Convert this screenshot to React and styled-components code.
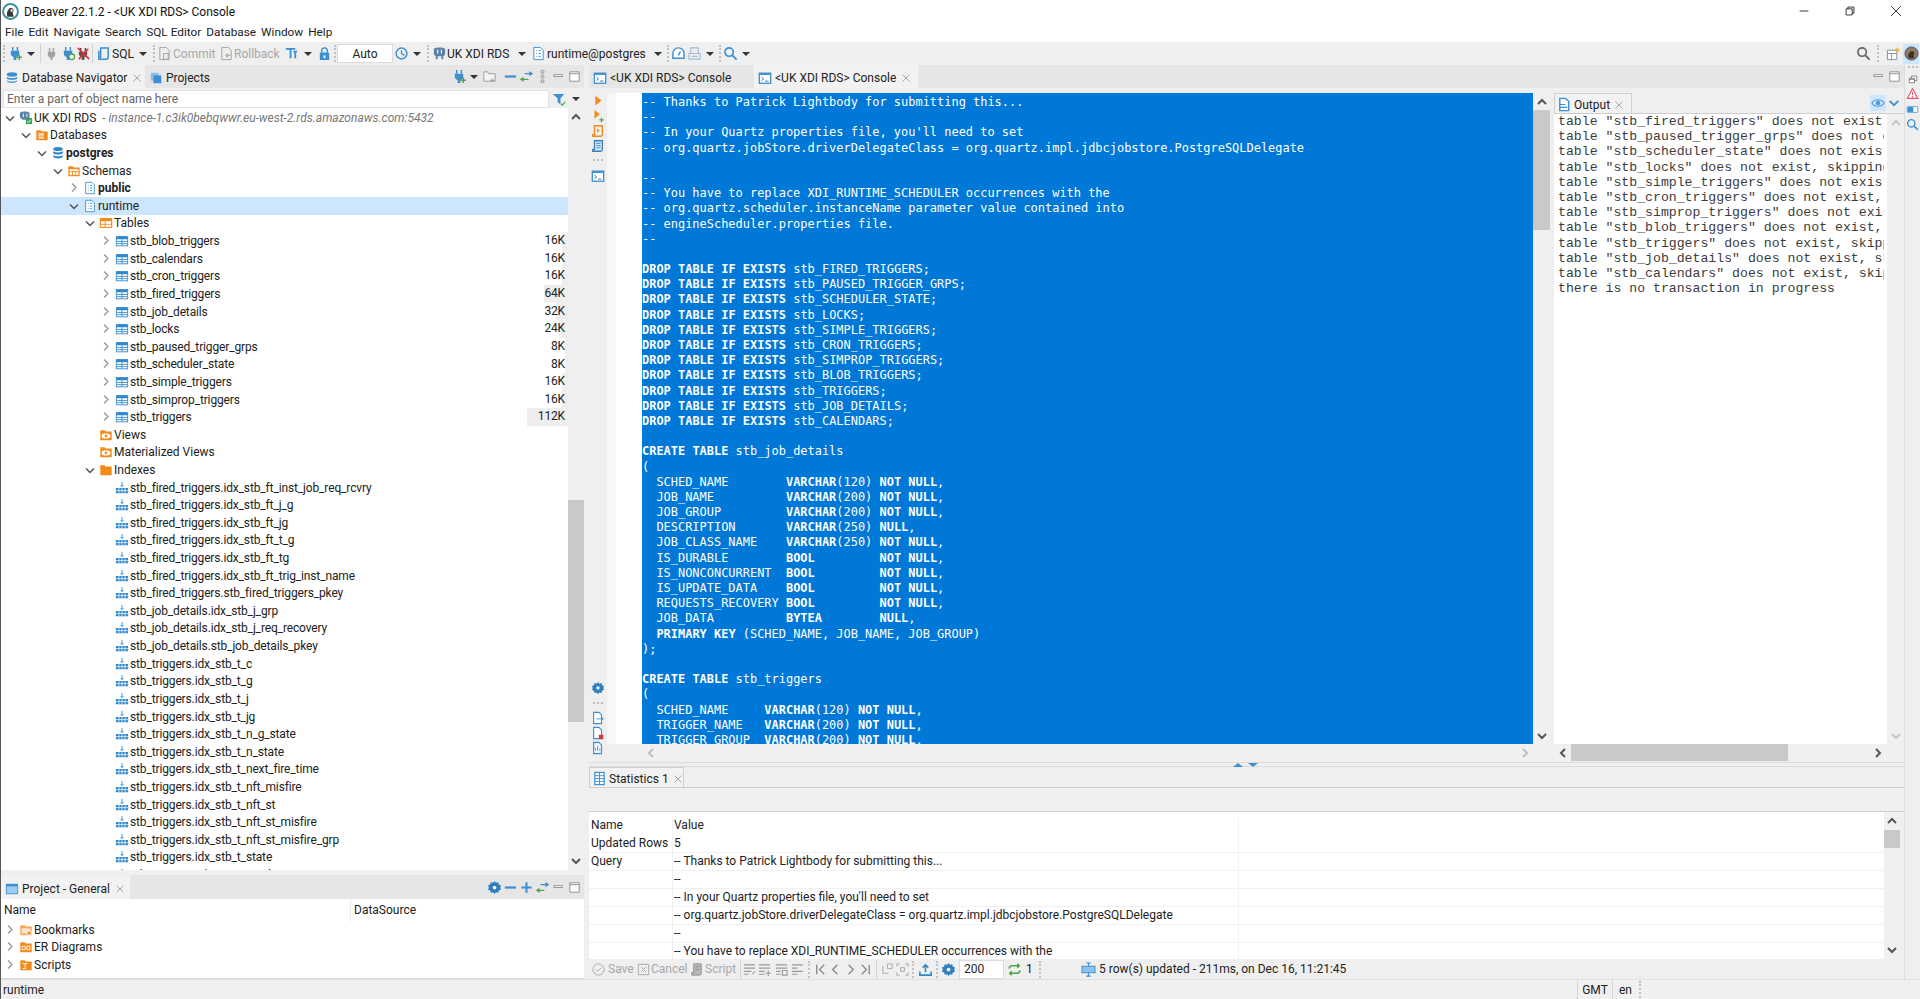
import React from 'react';
import styled, { createGlobalStyle } from 'styled-components';

const BLUE = '#3d8fd1';
const ORANGE = '#f28b1c';
const GREEN = '#4aa84a';
const RED = '#d8343c';
const GREY = '#a2a2a2';
const DARK = '#555';

const GlobalStyle = createGlobalStyle`
  html, body {
    margin: 0;
    padding: 0;
    height: 100%;
    overflow: hidden;
    background: #efefef;
  }
  #root {
    height: 100%;
  }
`;

const Window = styled.div`
  width: 1920px;
  height: 999px;
  display: flex;
  flex-direction: column;
  overflow: hidden;
  box-sizing: border-box;
  border-left: 1px solid #555;
  background: #efefef;
  color: #222;
  font-family: Roboto, "Noto Sans", sans-serif;
  font-size: 12px;
`;

const IconSvg = styled.svg`
  flex: none;
  display: block;
`;
const TitleBar = styled.div`
  height: 22px;
  flex: none;
  display: flex;
  align-items: center;
  background: #fff;
  padding-left: 1px;
  font-size: 12px;
  color: #111;
`;
const TitleText = styled.span`
  margin-left: 5px;
  padding-top: 2px;
`;
const WindowButtons = styled.div`
  margin-left: auto;
  display: flex;
  margin-right: 1px;
`;
const WindowButton = styled.div`
  width: 46px;
  height: 20px;
  display: flex;
  align-items: center;
  justify-content: center;
`;
const MenuBar = styled.div`
  height: 20px;
  flex: none;
  display: flex;
  align-items: center;
  gap: 5px;
  padding-left: 4px;
  background: #fff;
  font-size: 11.8px;
`;
const Toolbar = styled.div`
  height: 23px;
  flex: none;
  display: flex;
  align-items: center;
  background: #efefef;
`;
const Slot = styled.div`
  width: ${p => p.$w}px;
  height: ${p => p.$h || 20}px;
  flex: none;
  display: flex;
  align-items: center;
  justify-content: center;
  background: ${p => p.$bg || 'transparent'};
`;
const ToolText = styled.div`
  width: ${p => p.$w}px;
  flex: none;
  white-space: nowrap;
  color: ${p => (p.$off ? '#a8a8a8' : '#222')};
  padding-left: ${p => p.$pl || 0}px;
  box-sizing: border-box;
`;
const Push = styled.div`
  flex: 1;
`;
const CaretShape = styled.div`
  width: 0;
  height: 0;
  border-left: 4px solid transparent;
  border-right: 4px solid transparent;
  border-top: 4px solid #333;
`;
const Dots = styled.div`
  width: 0;
  height: 17px;
  border-left: 2px dotted #c0c0c0;
`;
const Divider = styled.div`
  width: 1px;
  height: 19px;
  background: #d2d2d2;
`;
const ValueBox = styled.div`
  width: ${p => p.$w}px;
  height: 19px;
  flex: none;
  box-sizing: border-box;
  background: #fff;
  border: 1px solid #dcdcdc;
  display: flex;
  align-items: center;
  justify-content: ${p => (p.$left ? 'flex-start' : 'center')};
  padding-left: ${p => (p.$left ? 4 : 0)}px;
  font-size: 12px;
`;

const Workspace = styled.div`
  flex: 1;
  min-height: 0;
  display: flex;
`;
const LeftColumn = styled.div`
  width: 583px;
  flex: none;
  display: flex;
  flex-direction: column;
`;
const NavPanel = styled.div`
  height: 805px;
  flex: none;
  display: flex;
  flex-direction: column;
  overflow: hidden;
`;
const ProjectPanel = styled.div`
  margin-top: 5px;
  flex: 1;
  min-height: 0;
  display: flex;
  flex-direction: column;
  background: #fff;
  border-bottom: 1px solid #d8d8d8;
`;
const TabRow = styled.div`
  height: ${p => p.$h || 23}px;
  flex: none;
  display: flex;
  align-items: stretch;
  background: ${p => p.$bg || '#e6e6e6'};
  border-bottom: ${p => (p.$line ? '1px solid #cfcfcf' : 'none')};
  box-sizing: border-box;
`;
const Tab = styled.div`
  width: ${p => p.$w}px;
  flex: none;
  box-sizing: border-box;
  display: flex;
  align-items: center;
  gap: ${p => (p.$boxed ? 2 : 3)}px;
  padding-left: ${p => (p.$boxed ? 2 : 4)}px;
  padding-top: ${p => (p.$boxed ? 2 : 3)}px;
  font-size: 12px;
  white-space: nowrap;
  background: ${p => (p.$active ? '#f2f2f2' : 'transparent')};
  border-top: ${p => (p.$boxed ? '1px solid #d0d0d0' : 'none')};
  border-right: ${p => (p.$boxed ? '1px solid #d0d0d0' : 'none')};
  border-left: ${p => (p.$boxed ? '1px solid #d0d0d0' : 'none')};
`;
const TabClose = styled.span`
  margin-left: auto;
  margin-right: ${p => p.$mr || 5}px;
  display: flex;
`;
const TabTools = styled.div`
  margin-left: auto;
  display: flex;
  align-items: center;
  padding-right: ${p => p.$pr || 2}px;
`;
const FilterRow = styled.div`
  height: 20px;
  flex: none;
  display: flex;
  align-items: flex-end;
  padding-left: 2px;
  background: #efefef;
`;
const FilterInput = styled.div`
  width: 546px;
  height: 18px;
  box-sizing: border-box;
  background: #fff;
  border: 1px solid #e2e2e2;
  padding-left: 3px;
  line-height: 16px;
  color: #666;
`;
const TreeArea = styled.div`
  flex: 1;
  min-height: 0;
  display: flex;
  background: #fff;
`;
const Tree = styled.div`
  flex: 1;
  min-width: 0;
  overflow: hidden;
  padding-top: 1px;
`;
const Row = styled.div`
  height: 17.62px;
  display: flex;
  align-items: center;
  padding-left: ${p => p.$level * 16 + 3}px;
  background: ${p => (p.$selected ? '#cde6ff' : 'transparent')};
  white-space: nowrap;
  font-weight: ${p => (p.$bold ? 700 : 400)};
  letter-spacing: ${p => (p.$level === 6 ? '-0.14px' : 'normal')};
`;
const ChevronBox = styled.div`
  width: 12px;
  height: 12px;
  flex: none;
  display: flex;
  align-items: center;
  justify-content: center;
`;
const RowIcon = styled.div`
  width: 16px;
  height: 16px;
  flex: none;
  margin-left: 2px;
  display: flex;
  align-items: center;
  justify-content: center;
`;
const RowDesc = styled.span`
  margin-left: 6px;
  font-style: italic;
  color: #777;
`;
const RowSize = styled.div`
  margin-left: auto;
  height: 100%;
  width: 50px;
  box-sizing: border-box;
  padding-right: 3px;
  text-align: right;
  line-height: 17.62px;
  background: linear-gradient(to left, #eeeeee ${p => p.$bar}px, transparent 0);
`;
const ScrollV = styled.div`
  width: ${p => p.$w || 16}px;
  flex: none;
  display: flex;
  flex-direction: column;
  align-items: stretch;
  background: #f0f0f0;
`;
const ScrollEnd = styled.div`
  height: ${p => p.$h || 18}px;
  flex: none;
  display: flex;
  align-items: center;
  justify-content: center;
`;
const ScrollGap = styled.div`
  height: ${p => p.$h}px;
  flex: ${p => (p.$h ? 'none' : 1)};
`;
const ScrollThumb = styled.div`
  height: ${p => p.$h}px;
  flex: none;
  background: #c9c9c9;
`;
const ColumnHeaders = styled.div`
  height: 21px;
  flex: none;
  display: grid;
  grid-template-columns: 349px 1fr;
  align-items: center;
`;
const ColumnHead = styled.div`
  height: 100%;
  line-height: 23px;
  padding-left: ${p => p.$pl}px;
  border-left: ${p => (p.$sep ? '1px solid #eee' : 'none')};
`;
const ProjectRows = styled.div`
  padding-top: 1px;
`;

const Sash = styled.div`
  width: 5px;
  flex: none;
`;
const CenterColumn = styled.div`
  flex: 1;
  min-width: 0;
  display: flex;
  flex-direction: column;
`;
const ConsoleBody = styled.div`
  height: 674px;
  flex: none;
  display: flex;
  padding-top: 5px;
  box-sizing: border-box;
`;
const EditorSide = styled.div`
  width: 961px;
  flex: none;
  display: flex;
  flex-direction: column;
`;
const EditorMain = styled.div`
  height: 651px;
  flex: none;
  display: flex;
`;
const SideBar = styled.div`
  width: 18px;
  height: 662px;
  flex: none;
  align-self: flex-start;
  display: flex;
  flex-direction: column;
  align-items: center;
`;
const SideBarItem = styled.div`
  height: ${p => p.$h || 15}px;
  flex: none;
  display: flex;
  align-items: center;
  justify-content: center;
`;
const SideDots = styled.div`
  width: 10px;
  height: 0;
  border-top: 2px dotted #bdbdbd;
  margin: ${p => p.$m};
`;
const SideSpring = styled.div`
  flex: 1;
`;
const Ruler = styled.div`
  width: 9px;
  flex: none;
  background: #f7f7f7;
`;
const LineGutter = styled.div`
  width: 26px;
  flex: none;
  background: #fff;
`;
const Code = styled.div`
  flex: 1;
  min-width: 0;
  overflow: hidden;
  box-sizing: border-box;
  padding-top: 2px;
  background: #0078d7;
  color: #fff;
  font-family: "DejaVu Sans Mono", "Liberation Mono", monospace;
  font-size: 11.96px;
  line-height: 15.2px;
  white-space: pre;
`;
const CodeLine = styled.div`
  height: 15.2px;
`;
const ScrollH = styled.div`
  height: 17px;
  flex: none;
  display: flex;
  align-items: center;
  background: #f0f0f0;
  margin-left: ${p => p.$ml || 0}px;
`;
const ScrollHEnd = styled.div`
  width: ${p => p.$w || 17}px;
  flex: none;
  display: flex;
  align-items: center;
  justify-content: center;
`;
const ScrollHThumb = styled.div`
  width: ${p => p.$w}px;
  height: 17px;
  flex: none;
  background: #c9c9c9;
`;
const Spring = styled.div`
  flex: 1;
`;
const OutputPanel = styled.div`
  width: 350px;
  flex: none;
  margin-left: 4px;
  display: flex;
  flex-direction: column;
`;
const OutputBody = styled.div`
  height: 630px;
  flex: none;
  display: flex;
`;
const OutputText = styled.div`
  width: 333px;
  flex: none;
  box-sizing: border-box;
  overflow: hidden;
  background: #fff;
  border-left: 4px solid #fff;
  border-right: 3px solid #fff;
  color: #3c3c3c;
  font-family: "Liberation Mono", "Courier New", monospace;
  font-size: 13.2px;
  line-height: 15.2px;
  white-space: pre;
`;
const SplitBar = styled.div`
  height: 5px;
  flex: none;
  display: flex;
  justify-content: center;
  gap: 5px;
  align-items: center;
  box-sizing: border-box;
  border-top: 1px solid #dcdcdc;
  border-bottom: 1px solid #dcdcdc;
  padding-right: 2px;
`;
const StatsGap = styled.div`
  height: 24px;
  flex: none;
  border-bottom: 1px solid #cfcfcf;
  box-sizing: border-box;
`;
const StatsBody = styled.div`
  height: 147px;
  flex: none;
  display: flex;
  padding-right: 4px;
`;
const StatsTable = styled.div`
  flex: 1;
  min-width: 0;
  overflow: hidden;
  background: #fff;
  padding-top: 5px;
`;
const StatsRow = styled.div`
  height: 18px;
  display: grid;
  grid-template-columns: 83px 566px 1fr;
  box-sizing: border-box;
  border-bottom: ${p => (p.$head ? 'none' : '1px solid #f1f1f1')};
  line-height: 17px;
  white-space: nowrap;
`;
const StatsCell = styled.div`
  padding-left: ${p => (p.$first ? 2 : 1)}px;
  border-left: ${p => (p.$first ? 'none' : '1px solid #f1f1f1')};
  overflow: hidden;
`;
const ResultBar = styled.div`
  height: 20px;
  flex: none;
  display: flex;
  align-items: center;
`;
const TrimBar = styled.div`
  width: 15px;
  flex: none;
  margin-left: 0;
  border-left: 1px solid #dcdcdc;
  display: flex;
  flex-direction: column;
  align-items: center;
`;
const StatusBar = styled.div`
  height: 20px;
  flex: none;
  display: flex;
  align-items: center;
  padding-left: 2px;
  font-size: 12px;
  background: #f0f0f0;
  border-top: 1px solid #e0e0e0;
  box-sizing: border-box;
`;
const StatusCell = styled.div`
  width: ${p => p.$w}px;
  height: 100%;
  flex: none;
  box-sizing: border-box;
  border-left: 1px solid #d6d6d6;
  display: flex;
  align-items: center;
  justify-content: center;
`;

const paths = {
  minus: <path d="M3 8h10" stroke="#222" strokeWidth="1" />,
  restore: <path d="M3.5 5.5h7v7h-7zM5.5 5.5v-2h7v7h-2" stroke="#222" fill="none" />,
  closeBig: <path d="M2.5 2.5l11 11M13.5 2.5l-11 11" stroke="#222" fill="none" />,
  close: <path d="M4 4l8 8M12 4l-8 8" stroke="#9c9c9c" fill="none" />,
  min: <path d="M3 6h9v2H3z" fill="#fff" stroke="#8f8f8f" />,
  max: <path d="M3 3h10v10H3zM3 5h10" fill="#fff" stroke="#8f8f8f" />,
  open: <path d="M3 5.5l4 4 4-4" stroke={DARK} strokeWidth="1.5" fill="none" />,
  closed: <path d="M5 2.5l4 4-4 4" stroke="#9b9b9b" strokeWidth="1.4" fill="none" />,
  up: <path d="M3 9l4-4 4 4" stroke={DARK} strokeWidth="2" fill="none" />,
  down: <path d="M3 5l4 4 4-4" stroke={DARK} strokeWidth="2" fill="none" />,
  upOff: <path d="M3 9l4-4 4 4" stroke="#c6c6c6" strokeWidth="2" fill="none" />,
  downOff: <path d="M3 5l4 4 4-4" stroke="#c6c6c6" strokeWidth="2" fill="none" />,
  left: <path d="M9 3L5 7l4 4" stroke={DARK} strokeWidth="2" fill="none" />,
  right: <path d="M5 3l4 4-4 4" stroke={DARK} strokeWidth="2" fill="none" />,
  leftOff: <path d="M9 3L5 7l4 4" stroke="#c0c0c0" strokeWidth="2" fill="none" />,
  rightOff: <path d="M5 3l4 4-4 4" stroke="#c0c0c0" strokeWidth="2" fill="none" />,
  logo: (
    <>
      <circle cx="8" cy="8" r="7" fill="#fff" stroke="#3f8f9b" strokeWidth="1.8" />
      <path d="M5 13c-1-3 0-6 2-8 2-1 4 0 4 2l-1 2 1 4z" fill="#3a3a3a" />
      <path d="M8 6h2v2H8z" fill="#fff" />
    </>
  ),
  plugAdd: (
    <>
      <path d="M5 1v4M10 1v4" stroke={BLUE} strokeWidth="1.6" />
      <path d="M3 5h9v3a4 4 0 0 1-3 3.8V15H6v-3.2A4 4 0 0 1 3 8z" fill={BLUE} />
      <path d="M12 9v6M9 12h6" stroke={GREEN} strokeWidth="1.6" />
    </>
  ),
  plugGrey: (
    <>
      <path d="M6 2v4M10 2v4" stroke={GREY} strokeWidth="1.5" />
      <path d="M4 6h8v3a4 4 0 0 1-3 3.6V15H7v-2.4A4 4 0 0 1 4 9z" fill={GREY} />
    </>
  ),
  plugGreen: (
    <>
      <path d="M5 1v4M10 1v4" stroke={BLUE} strokeWidth="1.5" />
      <path d="M3 5h9v3a4 4 0 0 1-3 3.8V15H6v-3.2A4 4 0 0 1 3 8z" fill={BLUE} />
      <circle cx="11.5" cy="11.5" r="3" fill="#fff" stroke={GREEN} strokeWidth="1.4" />
    </>
  ),
  plugRed: (
    <>
      <path d="M5 2v4M10 2v4" stroke="#444" strokeWidth="1.5" />
      <path d="M3 6h9v2a4 4 0 0 1-3 3.8V15H6v-3.2A4 4 0 0 1 3 8z" fill="#555" />
      <path d="M2 2l12 12M13 3L3 14" stroke={RED} strokeWidth="1.7" />
    </>
  ),
  sqlFile: <path d="M5 2h8v10a2 2 0 0 1-2 2H3v-2h2zM3 12V5" stroke={BLUE} strokeWidth="1.6" fill="none" />,
  commit: <path d="M3 1.5h7l3 3v10H3zM7 8h5v6H7z" stroke={GREY} fill="none" />,
  rollback: <path d="M3 1.5h7l3 3v10H3zM7 10l2-2v4zM9 10h3" stroke={GREY} fill="none" />,
  txn: <path d="M2 3h10M7 3v10M10 6h4M12 6v7" stroke={BLUE} strokeWidth="2" fill="none" />,
  lock: (
    <>
      <path d="M5 7V5a3 3 0 0 1 6 0v2" stroke={BLUE} strokeWidth="1.5" fill="none" />
      <rect x="3" y="7" width="10" height="8" rx="1" fill={BLUE} />
      <rect x="7" y="10" width="2" height="3" fill="#fff" />
    </>
  ),
  history: (
    <>
      <circle cx="8" cy="8" r="5.8" fill="none" stroke={BLUE} strokeWidth="1.5" />
      <path d="M8 4.5V8l3 2" fill="none" stroke={BLUE} strokeWidth="1.3" />
    </>
  ),
  pg: (
    <>
      <path d="M2 3c2-2 10-2 12 0v6l-2 2v3h-2v-3H6v3H4v-3L2 9z" fill="#5b83a8" />
      <path d="M6 4v4M10 4v4" stroke="#fff" strokeWidth="1.2" />
    </>
  ),
  pgOk: (
    <>
      <path d="M1 2c2-2 9-2 11 0v6l-2 2H4L1 7z" fill="#5b83a8" />
      <path d="M5 3v4M9 3v4" stroke="#fff" />
      <rect x="8" y="8" width="7" height="7" fill="#3aa655" />
      <path d="M9.5 11.5l1.5 1.5 2.5-3" stroke="#fff" fill="none" />
    </>
  ),
  schema: (
    <>
      <path d="M3 1.5h7l3 3v10H3z" fill="#fff" stroke={BLUE} />
      <path d="M5.5 5h1M8 5h2.5M5.5 8h1M8 8h2.5M5.5 11h1M8 11h2.5" stroke={BLUE} />
    </>
  ),
  gauge: (
    <>
      <path d="M2 13V8a6 6 0 0 1 12 0v5z" fill="#fff" stroke={BLUE} strokeWidth="1.5" />
      <path d="M8 10l2-4" stroke={BLUE} strokeWidth="1.5" />
    </>
  ),
  printer: <path d="M4 8V2h8v6M2 8h12v6H2zM5 11h6" fill="none" stroke="#9fbcd6" strokeWidth="1.2" />,
  search: (
    <>
      <circle cx="6.5" cy="6.5" r="4.5" fill="none" stroke={BLUE} strokeWidth="1.7" />
      <path d="M10 10l4.5 4.5" stroke={BLUE} strokeWidth="2" />
    </>
  ),
  searchGrey: (
    <>
      <circle cx="6.5" cy="6.5" r="4.5" fill="none" stroke="#666" strokeWidth="1.7" />
      <path d="M10 10l4.5 4.5" stroke="#666" strokeWidth="2" />
    </>
  ),
  perspective: (
    <>
      <path d="M1.5 4.5h10v10h-10zM1.5 8h10M6 8v6.5" fill="#fff" stroke="#7d8f9f" />
      <path d="M12 1l1 2 2 .4-1.5 1.5.3 2.1L12 6l-1.8 1 .3-2.1L9 3.4l2-.4z" fill="#e8b93a" />
    </>
  ),
  beaver: (
    <>
      <circle cx="8" cy="8" r="7" fill="#8d7a68" stroke="#5a5a5a" />
      <path d="M5 13c-1-3 0-6 2-7 2-1 4 0 4 2l-1 2 1 3z" fill="#3c2f25" />
    </>
  ),
  dbTab: (
    <>
      <ellipse cx="8" cy="4" rx="6" ry="2.5" fill={BLUE} />
      <path d="M2 6.5c1 2 11 2 12 0v2c-1 2-11 2-12 0zM2 10.5c1 2 11 2 12 0v1c-1 3-11 3-12 0z" fill={BLUE} />
    </>
  ),
  projects: (
    <>
      <rect x="2" y="2" width="9" height="9" fill="#8fbfe6" />
      <rect x="5" y="5" width="9" height="9" fill={BLUE} />
    </>
  ),
  folderPlus: <path d="M2 3h4l1 2h7v8H2zM11 10v4M9 12h4" fill="#f4f4f4" stroke="#999" />,
  dash: <path d="M2 8h12" stroke={BLUE} strokeWidth="2.4" />,
  plus: <path d="M2.5 8h11M8 2.5v11" stroke={BLUE} strokeWidth="2.2" />,
  swap: (
    <>
      <path d="M6 5h8M11 3l3 2-3 2" stroke={BLUE} strokeWidth="1.4" fill="none" />
      <path d="M10 11H2M5 9l-3 2 3 2" stroke={GREEN} strokeWidth="1.4" fill="none" />
    </>
  ),
  chain: (
    <>
      <circle cx="8" cy="3" r="1.6" fill="none" stroke="#888" />
      <circle cx="8" cy="8" r="1.6" fill="none" stroke="#888" />
      <circle cx="8" cy="13" r="1.6" fill="none" stroke="#888" />
    </>
  ),
  funnel: (
    <>
      <path d="M1 2h12L9 7v6l-3-2V7z" fill={BLUE} />
      <path d="M9.5 12.5l1.5 1.5 3-3.5" stroke={GREEN} strokeWidth="1.3" fill="none" />
    </>
  ),
  console: (
    <>
      <rect x="1.5" y="2.5" width="13" height="11.5" fill="#fff" stroke={BLUE} strokeWidth="1.5" />
      <rect x="1.5" y="2.5" width="13" height="2" fill={BLUE} />
      <path d="M4 7l2.5 2L4 11M8 11.5h4" stroke="#2f6ea5" fill="none" />
    </>
  ),
  run: <path d="M5 2l7 5.5L5 13z" fill={ORANGE} />,
  runAdd: (
    <>
      <path d="M4 1l6 5-6 5z" fill={ORANGE} />
      <path d="M12 10v5M9.5 12.5h5" stroke={GREEN} strokeWidth="1.3" />
    </>
  ),
  runScript: (
    <>
      <path d="M4 2h9v10a2 2 0 0 1-2 2H2v-2h2z" fill="none" stroke={ORANGE} strokeWidth="1.6" />
      <path d="M7 5l3 2.5L7 10z" fill={ORANGE} />
    </>
  ),
  script: (
    <>
      <path d="M4 2h9v10a2 2 0 0 1-2 2H2v-2h2z" fill="#dcebf7" stroke="#3f7fb5" strokeWidth="1.5" />
      <path d="M6 5h5M6 7.5h5M6 10h5" stroke="#3f7fb5" />
    </>
  ),
  gear: (
    <>
      <path d="M8 1l1.5 2 2.5-.6.6 2.5 2.4 1-1 2.1 1 2.1-2.4 1-.6 2.5-2.5-.6L8 15l-1.5-2-2.5.6-.6-2.5-2.4-1 1-2.1-1-2.1 2.4-1 .6-2.5 2.5.6z" fill="#2f7fbf" />
      <circle cx="8" cy="8" r="2" fill="#efefef" />
    </>
  ),
  fileOut: (
    <>
      <path d="M3 1.5h6l3 3v10H3z" fill="#fff" stroke={BLUE} strokeWidth="1.3" />
      <path d="M6 9h8M12 7l2 2-2 2" stroke={BLUE} fill="none" />
    </>
  ),
  fileErr: (
    <>
      <path d="M3 1.5h6l3 3v10H3z" fill="#fff" stroke={BLUE} strokeWidth="1.3" />
      <rect x="9" y="10" width="5" height="5" fill={RED} />
    </>
  ),
  fileLog: (
    <>
      <path d="M3 1.5h6l3 3v10H3z" fill="#eaf3fb" stroke={BLUE} strokeWidth="1.3" />
      <path d="M5 11V8M7.5 11V6M10 11V9" stroke={BLUE} />
    </>
  ),
  outputDoc: (
    <>
      <path d="M3 1.5h6l3.5 3v10H3z" fill="#fff" stroke={BLUE} strokeWidth="1.5" />
      <path d="M3 8h6M3 11h8" stroke={BLUE} strokeWidth="1.3" />
    </>
  ),
  eye: (
    <>
      <path d="M1 8c3-5 11-5 14 0-3 5-11 5-14 0z" fill="none" stroke="#4a9ad8" strokeWidth="1.3" />
      <circle cx="8" cy="8" r="2.6" fill="#4a9ad8" />
    </>
  ),
  chevBlue: <path d="M3 5.5l5 5 5-5" fill="none" stroke={BLUE} strokeWidth="2" />,
  restoreSmall: <path d="M3 7h7v6H3zM6 7V4h7v6h-3M3 8.5h7" fill="#fff" stroke="#666" />,
  warn: <path d="M8 2l6.5 12h-13zM8 6v4M8 11.500v1.500" fill="#fff" stroke="#e5566a" strokeWidth="1.3" />,
  battery: (
    <>
      <rect x="1.5" y="4.5" width="13" height="7" rx="1" fill="#fff" stroke={BLUE} />
      <rect x="2" y="5" width="7" height="6" fill={BLUE} />
    </>
  ),
  table: (
    <>
      <rect x="1.5" y="3" width="13" height="10.5" fill="#fff" stroke="#2f87cc" />
      <rect x="1.5" y="3" width="13" height="3" fill="#2f87cc" />
      <path d="M2 8.5h12M2 11h12M8 6v7" stroke="#2f87cc" />
    </>
  ),
  index: (
    <>
      <path d="M8 1v5M6.3 4.500L8 6.500l1.700-2" stroke="#2f87cc" fill="none" />
      <rect x="1" y="8" width="14" height="6" fill="#2f87cc" />
      <path d="M1 11h14M4.5 8v6M8 8v6M11.5 8v6" stroke="#fff" strokeWidth=".8" />
    </>
  ),
  db: (
    <>
      <ellipse cx="8" cy="3.5" rx="5.5" ry="2.3" fill="#2f87cc" />
      <path d="M2.5 5.8c1 2 10 2 11 0v2.500c-1 2-10 2-11 0zM2.500 10.200c1 2 10 2 11 0v1.800c-1 3-10 3-11 0z" fill="#2f87cc" />
    </>
  ),
  folderDb: (
    <>
      <path d="M1.5 2.5h5l1 1.5h7v10h-13z" fill={ORANGE} />
      <rect x="4" y="6" width="6" height="6" fill="#fff" />
      <path d="M4 8h6M4 10h6" stroke={ORANGE} />
    </>
  ),
  folderGrid: (
    <>
      <path d="M1.5 2.5h5l1 1.5h7v10h-13z" fill={ORANGE} />
      <rect x="3" y="6" width="10" height="6.5" fill="#fff" />
      <path d="M3 8.5h10M6.3 8.5v4M9.6 8.5v4" stroke={ORANGE} />
    </>
  ),
  folderTable: (
    <>
      <rect x="1.5" y="3" width="13" height="10" fill="#fff" stroke={ORANGE} strokeWidth="1.3" />
      <rect x="1.5" y="3" width="13" height="3" fill={ORANGE} />
      <path d="M2 9.5h12M7 6v7" stroke={ORANGE} />
    </>
  ),
  folderEye: (
    <>
      <path d="M1.5 2.5h5l1 1.5h7v10h-13z" fill={ORANGE} />
      <ellipse cx="8" cy="9" rx="5" ry="3" fill="#fff" />
      <circle cx="8" cy="9" r="1.5" fill={ORANGE} />
    </>
  ),
  folder: <path d="M1.5 2.5h5l1 1.5h7v10h-13z" fill={ORANGE} />,
  folderStar: (
    <>
      <path d="M1.5 2.5h5l1 1.5h7v10h-13z" fill="#f5a658" />
      <path d="M3 6h10v6H3z" fill="#fde4cb" />
      <circle cx="11.5" cy="11.5" r="2.5" fill={ORANGE} stroke="#fff" />
    </>
  ),
  folderEr: (
    <>
      <path d="M1.5 2.5h5l1 1.5h7v10h-13z" fill={ORANGE} />
      <path d="M3.5 7H7v4H3.5zM9 7h3.5v4H9z" fill="none" stroke="#fff" />
    </>
  ),
  folderScript: (
    <>
      <path d="M1.5 2.5h5l1 1.5h7v10h-13z" fill={ORANGE} />
      <path d="M4 6.5h6M7 6.5V12M4 12h4" fill="none" stroke="#fff" />
    </>
  ),
  projectWin: (
    <>
      <rect x="1.5" y="2.5" width="13" height="11" fill="#9fcbed" stroke="#3d8fd1" />
      <rect x="1.5" y="2.5" width="13" height="2.5" fill="#3d8fd1" />
    </>
  ),
  statsGrid: (
    <>
      <rect x="3" y="1.5" width="10" height="13" fill="#fff" stroke={BLUE} strokeWidth="1.3" />
      <path d="M3 5h10M3 8h10M3 11h10M8 2v12" stroke={BLUE} />
    </>
  ),
  save: (
    <>
      <circle cx="8" cy="8" r="6" fill="none" stroke="#a8a8a8" />
      <path d="M5 8l2 2 4-4" fill="none" stroke="#a8a8a8" />
    </>
  ),
  cancel: <path d="M2.5 2.5h11v11h-11zM5.5 5.5l5 5M10.5 5.5l-5 5" fill="none" stroke="#a8a8a8" />,
  scriptOff: <path d="M5 2h8v10a2 2 0 0 1-2 2H3v-3h2zM7 5h4M7 8h4" fill="#b8b8b8" stroke="#8f8f8f" />,
  rowEdit: <path d="M2 3h12M2 6.5h12M2 10h8M2 13h5M11 13l3-3" fill="none" stroke="#9a9a9a" strokeWidth="1.2" />,
  rowAdd: <path d="M2 3h12M2 6.5h12M2 10h6M2 13h6M12 9v6M9 12h6" fill="none" stroke="#9a9a9a" strokeWidth="1.2" />,
  rowCopy: <path d="M2 3h12M2 6.5h12M2 10h5M2 13h5M9 9h5v5H9z" fill="none" stroke="#9a9a9a" strokeWidth="1.2" />,
  rowDel: <path d="M2 3h12M2 6.5h6M2 10h12M2 13h6" fill="none" stroke="#9a9a9a" strokeWidth="1.2" />,
  first: <path d="M4 3v10M12 3L7 8l5 5" fill="none" stroke="#888" strokeWidth="1.4" />,
  prev: <path d="M10 3L5 8l5 5" fill="none" stroke="#888" strokeWidth="1.4" />,
  next: <path d="M6 3l5 5-5 5" fill="none" stroke="#888" strokeWidth="1.4" />,
  last: <path d="M12 3v10M4 3l5 5-5 5" fill="none" stroke="#888" strokeWidth="1.4" />,
  corner: <path d="M3 4v8h6M8 2h5v5H8z" fill="none" stroke="#a8a8a8" />,
  frame: <path d="M2 5V2h3M11 2h3v3M14 11v3h-3M5 14H2v-3M6 6h4v4H6z" fill="none" stroke="#a8a8a8" />,
  upload: <path d="M8 11V3M5 6l3-3 3 3M2 10v4h12v-4" fill="none" stroke="#2f87cc" strokeWidth="1.7" />,
  sync: <path d="M2 7a4 4 0 0 1 4-3h7M11 2l2 2-2 2M14 9a4 4 0 0 1-4 3H3M5 10l-2 2 2 2" fill="none" stroke={GREEN} strokeWidth="1.7" />,
  rowsDone: (
    <>
      <path d="M8 1v14M5.5 1h5M5.5 15h5" stroke={BLUE} strokeWidth="1.2" fill="none" />
      <rect x="1" y="4.5" width="14" height="7" fill="#8fc0e8" stroke={BLUE} />
    </>
  ),
};

const Ico = ({ n, s = 16 }) => (
  <IconSvg width={s} height={s} viewBox="0 0 16 16" aria-hidden="true">{paths[n]}</IconSvg>
);
const Arrow = ({ n }) => (
  <IconSvg width="14" height="14" viewBox="0 0 14 14" aria-hidden="true">{paths[n]}</IconSvg>
);
const Caret = ({ w = 14 }) => <Slot $w={w}><CaretShape /></Slot>;
const Grip = ({ w = 6 }) => <Slot $w={w}><Dots /></Slot>;
const Sep = ({ w = 4 }) => <Slot $w={w}><Divider /></Slot>;
const Tool = ({ n, w = 16, s = 15, bg }) => <Slot $w={w} $bg={bg}><Ico n={n} s={s} /></Slot>;

const sizeRow = (name, size, bar) => ({ l: 6, c: 'closed', i: 'table', t: name, size, bar });
const indexRow = t => ({ l: 6, c: null, i: 'index', t });

const treeRows = [
  { l: 0, c: 'open', i: 'pgOk', t: 'UK XDI RDS', desc: ' - instance-1.c3ik0bebqwwr.eu-west-2.rds.amazonaws.com:5432' },
  { l: 1, c: 'open', i: 'folderDb', t: 'Databases' },
  { l: 2, c: 'open', i: 'db', t: 'postgres', bold: true },
  { l: 3, c: 'open', i: 'folderGrid', t: 'Schemas' },
  { l: 4, c: 'closed', i: 'schema', t: 'public', bold: true },
  { l: 4, c: 'open', i: 'schema', t: 'runtime', selected: true },
  { l: 5, c: 'open', i: 'folderTable', t: 'Tables' },
  sizeRow('stb_blob_triggers', '16K', 6),
  sizeRow('stb_calendars', '16K', 6),
  sizeRow('stb_cron_triggers', '16K', 6),
  sizeRow('stb_fired_triggers', '64K', 24),
  sizeRow('stb_job_details', '32K', 12),
  sizeRow('stb_locks', '24K', 9),
  sizeRow('stb_paused_trigger_grps', '8K', 3),
  sizeRow('stb_scheduler_state', '8K', 3),
  sizeRow('stb_simple_triggers', '16K', 6),
  sizeRow('stb_simprop_triggers', '16K', 6),
  sizeRow('stb_triggers', '112K', 41),
  { l: 5, c: null, i: 'folderEye', t: 'Views' },
  { l: 5, c: null, i: 'folderEye', t: 'Materialized Views' },
  { l: 5, c: 'open', i: 'folder', t: 'Indexes' },
  ...[
    'stb_fired_triggers.idx_stb_ft_inst_job_req_rcvry',
    'stb_fired_triggers.idx_stb_ft_j_g',
    'stb_fired_triggers.idx_stb_ft_jg',
    'stb_fired_triggers.idx_stb_ft_t_g',
    'stb_fired_triggers.idx_stb_ft_tg',
    'stb_fired_triggers.idx_stb_ft_trig_inst_name',
    'stb_fired_triggers.stb_fired_triggers_pkey',
    'stb_job_details.idx_stb_j_grp',
    'stb_job_details.idx_stb_j_req_recovery',
    'stb_job_details.stb_job_details_pkey',
    'stb_triggers.idx_stb_t_c',
    'stb_triggers.idx_stb_t_g',
    'stb_triggers.idx_stb_t_j',
    'stb_triggers.idx_stb_t_jg',
    'stb_triggers.idx_stb_t_n_g_state',
    'stb_triggers.idx_stb_t_n_state',
    'stb_triggers.idx_stb_t_next_fire_time',
    'stb_triggers.idx_stb_t_nft_misfire',
    'stb_triggers.idx_stb_t_nft_st',
    'stb_triggers.idx_stb_t_nft_st_misfire',
    'stb_triggers.idx_stb_t_nft_st_misfire_grp',
    'stb_triggers.idx_stb_t_state',
    'stb_triggers.stb_triggers_pkey',
  ].map(indexRow),
];

const sqlLines = [
  '-- Thanks to Patrick Lightbody for submitting this...',
  '--',
  "-- In your Quartz properties file, you'll need to set",
  '-- org.quartz.jobStore.driverDelegateClass = org.quartz.impl.jdbcjobstore.PostgreSQLDelegate',
  '',
  '--',
  '-- You have to replace XDI_RUNTIME_SCHEDULER occurrences with the',
  '-- org.quartz.scheduler.instanceName parameter value contained into',
  '-- engineScheduler.properties file.',
  '--',
  '',
  'DROP TABLE IF EXISTS stb_FIRED_TRIGGERS;',
  'DROP TABLE IF EXISTS stb_PAUSED_TRIGGER_GRPS;',
  'DROP TABLE IF EXISTS stb_SCHEDULER_STATE;',
  'DROP TABLE IF EXISTS stb_LOCKS;',
  'DROP TABLE IF EXISTS stb_SIMPLE_TRIGGERS;',
  'DROP TABLE IF EXISTS stb_CRON_TRIGGERS;',
  'DROP TABLE IF EXISTS stb_SIMPROP_TRIGGERS;',
  'DROP TABLE IF EXISTS stb_BLOB_TRIGGERS;',
  'DROP TABLE IF EXISTS stb_TRIGGERS;',
  'DROP TABLE IF EXISTS stb_JOB_DETAILS;',
  'DROP TABLE IF EXISTS stb_CALENDARS;',
  '',
  'CREATE TABLE stb_job_details',
  '(',
  '  SCHED_NAME        VARCHAR(120) NOT NULL,',
  '  JOB_NAME          VARCHAR(200) NOT NULL,',
  '  JOB_GROUP         VARCHAR(200) NOT NULL,',
  '  DESCRIPTION       VARCHAR(250) NULL,',
  '  JOB_CLASS_NAME    VARCHAR(250) NOT NULL,',
  '  IS_DURABLE        BOOL         NOT NULL,',
  '  IS_NONCONCURRENT  BOOL         NOT NULL,',
  '  IS_UPDATE_DATA    BOOL         NOT NULL,',
  '  REQUESTS_RECOVERY BOOL         NOT NULL,',
  '  JOB_DATA          BYTEA        NULL,',
  '  PRIMARY KEY (SCHED_NAME, JOB_NAME, JOB_GROUP)',
  ');',
  '',
  'CREATE TABLE stb_triggers',
  '(',
  '  SCHED_NAME     VARCHAR(120) NOT NULL,',
  '  TRIGGER_NAME   VARCHAR(200) NOT NULL,',
  '  TRIGGER_GROUP  VARCHAR(200) NOT NULL,',
];

const outputLines = [
  'table "stb_fired_triggers" does not exist, skipping',
  'table "stb_paused_trigger_grps" does not exist, skipping',
  'table "stb_scheduler_state" does not exist, skipping',
  'table "stb_locks" does not exist, skipping',
  'table "stb_simple_triggers" does not exist, skipping',
  'table "stb_cron_triggers" does not exist, skipping',
  'table "stb_simprop_triggers" does not exist, skipping',
  'table "stb_blob_triggers" does not exist, skipping',
  'table "stb_triggers" does not exist, skipping',
  'table "stb_job_details" does not exist, skipping',
  'table "stb_calendars" does not exist, skipping',
  'there is no transaction in progress',
];

const statsRows = [
  ['Updated Rows', '5'],
  ['Query', '-- Thanks to Patrick Lightbody for submitting this...'],
  ['', '--'],
  ['', "-- In your Quartz properties file, you'll need to set"],
  ['', '-- org.quartz.jobStore.driverDelegateClass = org.quartz.impl.jdbcjobstore.PostgreSQLDelegate'],
  ['', '--'],
  ['', '-- You have to replace XDI_RUNTIME_SCHEDULER occurrences with the'],
];

const KEYWORDS = /\b(DROP|TABLE|IF|EXISTS|CREATE|VARCHAR|NOT|NULL|BOOL|BYTEA|PRIMARY|KEY)\b/;

// keywords go bold, comments stay plain
const highlight = line => {
  if (line.startsWith('--')) return line;
  return line.split(KEYWORDS).map((part, i) => (i % 2 ? <b key={i}>{part}</b> : part));
};

const TreeRow = ({ row }) => (
  <Row $level={row.l} $selected={row.selected} $bold={row.bold}>
    <ChevronBox>{row.c && <Arrow n={row.c} />}</ChevronBox>
    <RowIcon><Ico n={row.i} s={14} /></RowIcon>
    {row.t}
    {row.desc && <RowDesc>{row.desc}</RowDesc>}
    {row.size && <RowSize $bar={row.bar}>{row.size}</RowSize>}
  </Row>
);

const App = () => (
  <>
    <GlobalStyle />
    <Window>
      <TitleBar>
        <Ico n="logo" s={17} />
        <TitleText>DBeaver 22.1.2 - &lt;UK XDI RDS&gt; Console</TitleText>
        <WindowButtons>
          <WindowButton><Ico n="minus" s={14} /></WindowButton>
          <WindowButton><Ico n="restore" s={14} /></WindowButton>
          <WindowButton><Ico n="closeBig" s={14} /></WindowButton>
        </WindowButtons>
      </TitleBar>
      <MenuBar>
        {['File', 'Edit', 'Navigate', 'Search', 'SQL Editor', 'Database', 'Window', 'Help'].map(m => (
          <span key={m}>{m}</span>
        ))}
      </MenuBar>

      <Toolbar>
        <Grip w={5} />
        <Tool n="plugAdd" w={18} />
        <Caret />
        <Sep />
        <Tool n="plugGrey" w={18} />
        <Tool n="plugGreen" />
        <Tool n="plugRed" w={14} />
        <Sep w={5} />
        <Tool n="sqlFile" />
        <ToolText $w={24} $pl={1}>SQL</ToolText>
        <Caret w={16} />
        <Grip />
        <Tool n="commit" w={15} />
        <ToolText $w={48} $off $pl={1}>Commit</ToolText>
        <Tool n="rollback" w={13} />
        <ToolText $w={50} $off $pl={1}>Rollback</ToolText>
        <Tool n="txn" />
        <Caret w={17} />
        <Tool n="lock" />
        <Grip w={5} />
        <ValueBox $w={56}>Auto</ValueBox>
        <Tool n="history" w={17} />
        <Caret />
        <Grip w={8} />
        <Tool n="pg" w={15} />
        <ToolText $w={67}>UK XDI RDS</ToolText>
        <Caret w={16} />
        <Tool n="schema" />
        <ToolText $w={104} $pl={1}>runtime@postgres</ToolText>
        <Caret w={16} />
        <Grip w={4} />
        <Tool n="gauge" />
        <Tool n="printer" />
        <Caret w={16} />
        <Grip w={4} />
        <Tool n="search" w={17} />
        <Caret />
        <Push />
        <Tool n="searchGrey" />
        <Grip w={14} />
        <Tool n="perspective" />
        <Slot $w={2} />
        <Tool n="beaver" bg="#cde6ff" />
        <Slot $w={1} />
      </Toolbar>

      <Workspace>
        <LeftColumn>
          <NavPanel>
            <TabRow>
              <Tab $w={144} $active>
                <Ico n="dbTab" s={14} />
                Database Navigator
                <TabClose $mr={6}><Ico n="close" s={14} /></TabClose>
              </Tab>
              <Tab $w={70}>
                <Ico n="projects" s={14} />
                Projects
              </Tab>
              <TabTools>
                <Tool n="plugAdd" w={16} />
                <Caret w={14} />
                <Tool n="folderPlus" />
                <Slot $w={5} />
                <Tool n="dash" />
                <Tool n="swap" />
                <Tool n="chain" />
                <Tool n="min" />
                <Tool n="max" />
              </TabTools>
            </TabRow>
            <FilterRow>
              <FilterInput>Enter a part of object name here</FilterInput>
              <Slot $w={20} $h={18}><Ico n="funnel" s={15} /></Slot>
              <Slot $w={14} $h={18}><CaretShape /></Slot>
            </FilterRow>
            <TreeArea>
              <Tree>
                {treeRows.map(row => <TreeRow key={row.t} row={row} />)}
              </Tree>
              <ScrollV>
                <ScrollEnd><Arrow n="up" /></ScrollEnd>
                <ScrollGap $h={374} />
                <ScrollThumb $h={222} />
                <ScrollGap />
                <ScrollEnd><Arrow n="down" /></ScrollEnd>
              </ScrollV>
            </TreeArea>
          </NavPanel>
          <ProjectPanel>
            <TabRow $bg="#e6e6e6" $h={24}>
              <Tab $w={129} $active>
                <Ico n="projectWin" s={14} />
                Project - General
                <TabClose $mr={6}><Ico n="close" s={14} /></TabClose>
              </Tab>
              <TabTools>
                <Tool n="gear" />
                <Tool n="dash" />
                <Tool n="plus" />
                <Tool n="swap" />
                <Tool n="min" />
                <Tool n="max" />
              </TabTools>
            </TabRow>
            <ColumnHeaders>
              <ColumnHead $pl={3}>Name</ColumnHead>
              <ColumnHead $pl={3} $sep>DataSource</ColumnHead>
            </ColumnHeaders>
            <ProjectRows>
              <Row $level={0}><ChevronBox><Arrow n="closed" /></ChevronBox><RowIcon><Ico n="folderStar" s={14} /></RowIcon>Bookmarks</Row>
              <Row $level={0}><ChevronBox><Arrow n="closed" /></ChevronBox><RowIcon><Ico n="folderEr" s={14} /></RowIcon>ER Diagrams</Row>
              <Row $level={0}><ChevronBox><Arrow n="closed" /></ChevronBox><RowIcon><Ico n="folderScript" s={14} /></RowIcon>Scripts</Row>
            </ProjectRows>
          </ProjectPanel>
        </LeftColumn>
        <Sash />
        <CenterColumn>
          <TabRow>
            <Tab $w={165}>
              <Ico n="console" s={14} />
              &lt;UK XDI RDS&gt; Console
            </Tab>
            <Tab $w={164} $active>
              <Ico n="console" s={14} />
              &lt;UK XDI RDS&gt; Console
              <TabClose><Ico n="close" s={14} /></TabClose>
            </Tab>
            <TabTools $pr={2}>
              <Tool n="min" />
              <Tool n="max" />
            </TabTools>
          </TabRow>

          <ConsoleBody>
            <EditorSide>
              <EditorMain>
                <SideBar>
                  <SideBarItem $h={15}><Ico n="run" s={14} /></SideBarItem>
                  <SideBarItem $h={15}><Ico n="runAdd" s={14} /></SideBarItem>
                  <SideBarItem $h={15}><Ico n="runScript" s={14} /></SideBarItem>
                  <SideBarItem $h={15}><Ico n="script" s={14} /></SideBarItem>
                  <SideDots $m="6px 0" />
                  <SideBarItem $h={17}><Ico n="console" s={14} /></SideBarItem>
                  <SideSpring />
                  <SideBarItem $h={16}><Ico n="gear" s={14} /></SideBarItem>
                  <SideDots $m="6px 0" />
                  <SideBarItem $h={15}><Ico n="fileOut" s={14} /></SideBarItem>
                  <SideBarItem $h={15}><Ico n="fileErr" s={14} /></SideBarItem>
                  <SideBarItem $h={15}><Ico n="fileLog" s={14} /></SideBarItem>
                </SideBar>
                <Ruler />
                <LineGutter />
                <Code>
                  {sqlLines.map((line, i) => <CodeLine key={i}>{highlight(line)}</CodeLine>)}
                </Code>
                <ScrollV $w={17}>
                  <ScrollEnd $h={17}><Arrow n="up" /></ScrollEnd>
                  <ScrollThumb $h={120} />
                  <ScrollGap />
                  <ScrollEnd $h={17}><Arrow n="down" /></ScrollEnd>
                </ScrollV>
              </EditorMain>
              <ScrollH $ml={53}>
                <ScrollHEnd><Arrow n="leftOff" /></ScrollHEnd>
                <Spring />
                <ScrollHEnd><Arrow n="rightOff" /></ScrollHEnd>
                <ScrollHEnd />
              </ScrollH>
            </EditorSide>

            <OutputPanel>
              <TabRow $h={21} $bg="#efefef" $line>
                <Tab $w={78} $active $boxed>
                  <Ico n="outputDoc" s={15} />
                  Output
                  <TabClose><Ico n="close" s={14} /></TabClose>
                </Tab>
                <TabTools $pr={2}>
                  <Slot $w={16} $h={16} $bg="#cde6ff"><Ico n="eye" s={14} /></Slot>
                  <Slot $w={16} $h={16}><Ico n="chevBlue" s={14} /></Slot>
                </TabTools>
              </TabRow>
              <OutputBody>
                <OutputText>
                  {outputLines.map((line, i) => <div key={i}>{line}</div>)}
                </OutputText>
                <ScrollV $w={17}>
                  <ScrollEnd $h={17}><Arrow n="upOff" /></ScrollEnd>
                  <ScrollGap />
                  <ScrollEnd $h={17}><Arrow n="downOff" /></ScrollEnd>
                </ScrollV>
              </OutputBody>
              <ScrollH>
                <ScrollHEnd><Arrow n="left" /></ScrollHEnd>
                <ScrollHThumb $w={217} />
                <Spring />
                <ScrollHEnd><Arrow n="right" /></ScrollHEnd>
                <ScrollHEnd $w={18} />
              </ScrollH>
            </OutputPanel>
          </ConsoleBody>

          <SplitBar>
            <svg width="10" height="4" viewBox="0 0 10 4" aria-hidden="true"><path d="M0 4l5-4 5 4z" fill={BLUE} /></svg>
            <svg width="10" height="4" viewBox="0 0 10 4" aria-hidden="true"><path d="M0 0h10L5 4z" fill={BLUE} /></svg>
          </SplitBar>

          <TabRow $h={21} $bg="#efefef" $line>
            <Tab $w={95} $active $boxed>
              <Ico n="statsGrid" s={15} />
              Statistics 1
              <TabClose><Ico n="close" s={14} /></TabClose>
            </Tab>
          </TabRow>
          <StatsGap />
          <StatsBody>
            <StatsTable>
              <StatsRow $head>
                <StatsCell $first>Name</StatsCell>
                <StatsCell>Value</StatsCell>
                <StatsCell />
              </StatsRow>
              {statsRows.map((r, i) => (
                <StatsRow key={i}>
                  <StatsCell $first>{r[0]}</StatsCell>
                  <StatsCell>{r[1]}</StatsCell>
                  <StatsCell />
                </StatsRow>
              ))}
            </StatsTable>
            <ScrollV>
              <ScrollEnd><Arrow n="up" /></ScrollEnd>
              <ScrollThumb $h={18} />
              <ScrollGap />
              <ScrollEnd><Arrow n="down" /></ScrollEnd>
            </ScrollV>
          </StatsBody>
          <ResultBar>
            <Tool n="save" w={19} />
            <ToolText $w={28} $off>Save</ToolText>
            <Tool n="cancel" w={14} />
            <ToolText $w={39} $off $pl={1}>Cancel</ToolText>
            <Tool n="scriptOff" w={14} />
            <ToolText $w={36} $off $pl={2}>Script</ToolText>
            <Sep w={3} />
            <Tool n="rowEdit" w={14} />
            <Tool n="rowAdd" w={17} />
            <Tool n="rowCopy" w={16} />
            <Tool n="rowDel" w={16} />
            <Grip w={8} />
            <Tool n="first" w={14} />
            <Tool n="prev" w={16} />
            <Tool n="next" w={15} />
            <Tool n="last" w={15} />
            <Sep w={6} />
            <Tool n="corner" w={17} />
            <Tool n="frame" w={12} />
            <Grip w={10} />
            <Tool n="upload" w={14} />
            <Grip w={10} />
            <Tool n="gear" w={12} />
            <Slot $w={5} />
            <ValueBox $w={45} $left>200</ValueBox>
            <Tool n="sync" w={20} />
            <ToolText $w={14} $pl={2}>1</ToolText>
            <Grip w={4} />
            <Slot $w={38} />
            <Tool n="rowsDone" w={16} />
            <ToolText $w={260} $pl={3}>5 row(s) updated - 211ms, on Dec 16, 11:21:45</ToolText>
          </ResultBar>
        </CenterColumn>
        <TrimBar>
          <SideDots $m="1px 0 3px" />
          <SideBarItem $h={15}><Ico n="restoreSmall" s={12} /></SideBarItem>
          <SideBarItem $h={15}><Ico n="warn" s={13} /></SideBarItem>
          <SideBarItem $h={16}><Ico n="battery" s={13} /></SideBarItem>
          <SideBarItem $h={15}><Ico n="search" s={13} /></SideBarItem>
        </TrimBar>
      </Workspace>

      <StatusBar>
        runtime
        <Push />
        <StatusCell $w={35}>GMT</StatusCell>
        <StatusCell $w={26}>en</StatusCell>
        <Grip w={4} />
        <Slot $w={278} />
      </StatusBar>
    </Window>
  </>
);

export default App;
